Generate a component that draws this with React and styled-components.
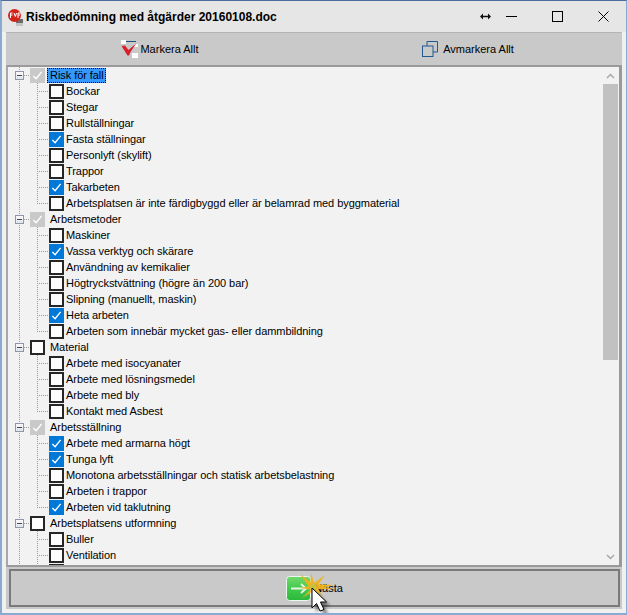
import React from 'react'
import styled, { createGlobalStyle } from 'styled-components'

const GlobalStyle = createGlobalStyle`
  html, body {
    margin: 0;
    padding: 0;
    background: #f0f0f0;
  }
  body {
    font-family: "Liberation Sans", Arial, sans-serif;
  }
`

const dotsDown = 'repeating-linear-gradient(to bottom, #9a9a9a 0 1px, transparent 1px 2px)'
const dotsAcross = 'repeating-linear-gradient(to right, #9a9a9a 0 1px, transparent 1px 2px)'

const Window = styled.div`
  width: 627px;
  height: 615px;
  box-sizing: border-box;
  display: flex;
  flex-direction: column;
  background: #f0f0f0;
  border: 1px solid #8aaad2;
  border-top-color: #4a6d9c;
  border-left-width: 2px;
  border-bottom: 2px solid #8aaad2;
  overflow: hidden;
  position: relative;
`

const TitleBar = styled.div`
  height: 31px;
  flex: none;
  display: flex;
  align-items: center;
  background: #e6e6e6;
  padding-left: 6px;
`

const AppBadge = styled.svg`
  width: 16px;
  height: 18px;
  flex: none;
  margin-right: 2px;
`

const TitleText = styled.span`
  flex: 1;
  font-size: 12px;
  font-weight: bold;
  color: #000;
  white-space: nowrap;
`

const ResizeHint = styled.div`
  width: 11px;
  height: 31px;
  flex: none;
  margin-right: -3px;
  display: flex;
  align-items: center;
`

const WindowButton = styled.div`
  width: 46px;
  height: 31px;
  display: flex;
  align-items: center;
  justify-content: center;
  flex: none;
`

const Body = styled.div`
  flex: 1;
  display: flex;
  flex-direction: column;
  margin: 0 4px 4px 4px;
  min-height: 0;
`

const Toolbar = styled.div`
  height: 33px;
  flex: none;
  display: grid;
  grid-template-columns: 1fr 1fr;
  background: #c9c9c9;
  border-top: 1px solid #b4b4b4;
  box-sizing: border-box;
`

const ToolButton = styled.div`
  display: flex;
  align-items: center;
  justify-content: center;
  gap: ${p => p.$gap || 2}px;
  font-size: 11px;
  color: #000;
`

const TreeFrame = styled.div`
  height: 502px;
  flex: none;
  box-sizing: border-box;
  display: flex;
  background: #f2f2f2;
  border: 2px solid #9a9a9a;
  border-right-width: 3px;
  border-left-color: #a8a8a8;
  overflow: hidden;
`

const TreeList = styled.div`
  flex: 1;
  min-width: 0;
  overflow: hidden;
`

const Row = styled.div`
  height: 16px;
  display: flex;
  align-items: center;
`

const TrunkCell = styled.div`
  width: 29px;
  height: 16px;
  flex: none;
  background-image: ${dotsDown};
  background-repeat: no-repeat;
  background-size: 1px 16px;
  background-position: 11px 0;
`

const RootGuide = styled.div`
  width: 22px;
  height: 16px;
  flex: none;
  display: flex;
  align-items: center;
  padding-left: 7px;
  box-sizing: border-box;
  background-image: ${dotsAcross}, ${dotsDown};
  background-repeat: no-repeat;
  background-size: 9px 1px, 1px 16px;
  background-position: 14px 8px, 11px 0;
`

const Expander = styled.div`
  width: 9px;
  height: 9px;
  box-sizing: border-box;
  border: 1px solid #8d97a5;
  background: linear-gradient(#fafafa, #dfe4ea);
  display: flex;
  align-items: center;
  justify-content: center;
  &::after {
    content: '';
    width: 5px;
    height: 1px;
    background: #3a4a66;
  }
`

const ChildGuide = styled.div`
  width: 12px;
  height: 16px;
  flex: none;
  background-image: ${dotsAcross}, ${dotsDown};
  background-repeat: no-repeat;
  background-size: 12px 1px, 1px ${p => (p.$last ? '9px' : '16px')};
  background-position: 0 8px, 0 0;
`

const boxColors = {
  gray: '#c9c9c9',
  on: '#0078d7',
  off: '#fdfdfd',
}

const Box = styled.div`
  width: 15px;
  height: 15px;
  box-sizing: border-box;
  flex: none;
  background: ${p => boxColors[p.$state]};
  border: 2px solid ${p => (p.$state === 'off' ? '#262626' : boxColors[p.$state])};
  display: flex;
  align-items: center;
  justify-content: center;
`

const Label = styled.span`
  font-size: 11px;
  line-height: 15px;
  letter-spacing: -0.06px;
  color: #000;
  white-space: nowrap;
  margin-left: ${p => (p.$root ? '2px' : '1px')};
  padding: 0 2px 0 ${p => (p.$root ? '3px' : '1px')};
  box-sizing: border-box;
  ${p => p.$selected && `
    background: #3399ff;
    outline: 1px dotted #000;
    outline-offset: -1px;
  `}
`

const ScrollBar = styled.div`
  width: 17px;
  flex: none;
  display: flex;
  flex-direction: column;
  align-items: center;
  background: #f2f2f2;
`

const ScrollArrow = styled.div`
  height: 17px;
  flex: none;
  display: flex;
  align-items: center;
  justify-content: center;
`

const ScrollTrack = styled.div`
  flex: 1;
  align-self: stretch;
  padding-left: 1px;
`

const ScrollThumb = styled.div`
  height: 276px;
  background: #c1c1c1;
  width: 15px;
`

const NextPanel = styled.div`
  flex: none;
  height: 42px;
  box-sizing: border-box;
  background: #c9c9c9;
  padding: 2px;
  border-left: 1px solid #c9c9c9;
`

const NextButton = styled.div`
  height: 38px;
  box-sizing: border-box;
  border: 2px solid #7a7a7a;
  display: flex;
  align-items: center;
  justify-content: center;
  gap: 3px;
  font-size: 11px;
  color: #000;
`

const GreenIcon = styled.svg`
  width: 25px;
  height: 25px;
  flex: none;
`

const CursorOverlay = styled.svg`
  position: absolute;
  left: 287px;
  top: 563px;
  width: 60px;
  height: 52px;
  pointer-events: none;
`

const Check = ({ color = '#fff' }) => (
  <svg width="11" height="11" viewBox="0 0 12 12">
    <path d="M1.500 6.500 L4.500 9.500 L10.500 2" fill="none" stroke={color} strokeWidth="1.500" />
  </svg>
)

const tree = [
  {
    label: 'Risk för fall', state: 'gray', selected: true,
    items: [
      ['Bockar'], ['Stegar'], ['Rullställningar'], ['Fasta ställningar', true],
      ['Personlyft (skylift)'], ['Trappor'], ['Takarbeten', true],
      ['Arbetsplatsen är inte färdigbyggd eller är belamrad med byggmaterial'],
    ],
  },
  {
    label: 'Arbetsmetoder', state: 'gray',
    items: [
      ['Maskiner'], ['Vassa verktyg och skärare', true], ['Användning av kemikalier'],
      ['Högtryckstvättning (högre än 200 bar)'], ['Slipning (manuellt, maskin)'],
      ['Heta arbeten', true], ['Arbeten som innebär mycket gas- eller dammbildning'],
    ],
  },
  {
    label: 'Material', state: 'off',
    items: [
      ['Arbete med isocyanater'], ['Arbete med lösningsmedel'], ['Arbete med bly'],
      ['Kontakt med Asbest'],
    ],
  },
  {
    label: 'Arbetsställning', state: 'gray',
    items: [
      ['Arbete med armarna högt', true], ['Tunga lyft', true],
      ['Monotona arbetsställningar och statisk arbetsbelastning'],
      ['Arbeten i trappor'], ['Arbeten vid taklutning', true],
    ],
  },
  {
    label: 'Arbetsplatsens utformning', state: 'off',
    items: [['Buller'], ['Ventilation'], ['']],
  },
]

const TreeBranch = ({ node }) => (
  <>
    <Row>
      <RootGuide><Expander /></RootGuide>
      <Box $state={node.state}>{node.state === 'gray' && <Check />}</Box>
      <Label $root $selected={node.selected}>{node.label}</Label>
    </Row>
    {node.items.map(([label, checked], i) => (
      <Row key={label || i}>
        <TrunkCell />
        <ChildGuide $last={i === node.items.length - 1} />
        <Box $state={checked ? 'on' : 'off'}>{checked && <Check />}</Box>
        <Label>{label}</Label>
      </Row>
    ))}
  </>
)

const App = () => (
  <Window>
    <GlobalStyle />
    <TitleBar>
      <AppBadge viewBox="0 0 16 18">
        <rect x="8" y="11" width="7" height="6" fill="#6b6b6b" />
        <rect x="8" y="15" width="7" height="3" fill="#c4c4c4" />
        <circle cx="6.500" cy="7.500" r="6.500" fill="#d3241c" />
        <path d="M2.500 10V5h2M2.500 7h2M6 5l1.300 3.500L8.600 5M10 10V5h2.500M10 7h2" stroke="#fff" strokeWidth="1" fill="none" />
      </AppBadge>
      <TitleText>Riskbedömning med åtgärder 20160108.doc</TitleText>
      <ResizeHint>
        <svg width="11" height="7" viewBox="0 0 11 7">
          <path d="M0 3.500 L3 0.500 V6.500Z M11 3.500 L8 0.500 V6.500Z" fill="#111" />
          <path d="M2 3.500H9" stroke="#111" strokeWidth="1.500" />
        </svg>
      </ResizeHint>
      <WindowButton>
        <svg width="11" height="11" viewBox="0 0 11 11"><path d="M0 5.500H11" stroke="#000" /></svg>
      </WindowButton>
      <WindowButton>
        <svg width="11" height="11" viewBox="0 0 11 11"><rect x="0.500" y="0.500" width="10" height="10" fill="none" stroke="#000" /></svg>
      </WindowButton>
      <WindowButton>
        <svg width="11" height="11" viewBox="0 0 11 11"><path d="M0.500 0.500L10.500 10.500M10.500 0.500L0.500 10.500" stroke="#000" /></svg>
      </WindowButton>
    </TitleBar>
    <Body>
      <Toolbar>
        <ToolButton>
          <svg width="17" height="18" viewBox="0 0 17 18">
            <rect x="0" y="0" width="5" height="4" fill="#fff" />
            <rect x="5" y="1" width="10" height="1" fill="#1f4f80" />
            <rect x="11" y="13" width="6" height="5" fill="#fff" />
            <rect x="13" y="4" width="4" height="3" fill="#fff" />
            <path d="M0.500 6 L4 5.500 L7.500 10 L15.500 3 L9.500 12 L8 15.500 L6.500 15.500 Z" fill="#d8202a" />
          </svg>
          Markera Allt
        </ToolButton>
        <ToolButton $gap={5}>
          <svg width="16" height="16" viewBox="0 0 16 16">
            <path d="M5 5V0.500H15.500V11H11" fill="none" stroke="#1f5a93" />
            <rect x="0.500" y="5" width="10.500" height="10.500" fill="none" stroke="#1f5a93" />
          </svg>
          Avmarkera Allt
        </ToolButton>
      </Toolbar>
      <TreeFrame>
        <TreeList>
          {tree.map(node => <TreeBranch key={node.label} node={node} />)}
        </TreeList>
        <ScrollBar>
          <ScrollArrow>
            <svg width="9" height="6" viewBox="0 0 9 6"><path d="M1 5L4.500 1.500L8 5" fill="none" stroke="#a8a8a8" strokeWidth="1.500" /></svg>
          </ScrollArrow>
          <ScrollTrack><ScrollThumb /></ScrollTrack>
          <ScrollArrow>
            <svg width="9" height="6" viewBox="0 0 9 6"><path d="M1 1L4.500 4.500L8 1" fill="none" stroke="#a8a8a8" strokeWidth="1.500" /></svg>
          </ScrollArrow>
        </ScrollBar>
      </TreeFrame>
      <NextPanel>
        <NextButton>
          <GreenIcon viewBox="0 0 25 25">
            <defs>
              <linearGradient id="greenFill" x1="0" y1="0" x2="0" y2="1">
                <stop offset="0" stopColor="#74d96f" />
                <stop offset="0.45" stopColor="#45cc4e" />
                <stop offset="1" stopColor="#2cb83c" />
              </linearGradient>
            </defs>
            <rect x="0.500" y="0.500" width="24" height="24" rx="3" fill="url(#greenFill)" stroke="#eef7ee" />
            <path d="M5 12.500H20" fill="none" stroke="#e6f5e6" strokeWidth="2" />
            <path d="M15 8l5 4.500-5 4.500" fill="none" stroke="#e6f5e6" strokeWidth="2" />
          </GreenIcon>
          Nästa
        </NextButton>
      </NextPanel>
    </Body>
    <CursorOverlay viewBox="0 0 60 52">
      <defs>
        <filter id="cursorShadow" x="-50%" y="-50%" width="200%" height="200%">
          <feGaussianBlur stdDeviation="1.500" />
        </filter>
      </defs>
      <g fill="#eeb31c" opacity="0.92">
        <path d="M11 10L25 21L21 25Z" />
        <path d="M22 9L26 22L21 22Z" />
        <path d="M36 11L26 25L22 21Z" />
        <path d="M45 21L24 26L24 20Z" />
        <path d="M45 25L24 25L25 21Z" />
        <path d="M11 24L24 21L24 26Z" />
        <path d="M13 34L25 22L26 26Z" />
        <path d="M34 32L22 25L25 21Z" />
      </g>
      <circle cx="24" cy="23" r="3" fill="#c8c040" />
      <path d="M25 26V46L29.500 41.500L33 49L37 47.500L33.500 40H39.500Z" fill="#000" opacity="0.450" filter="url(#cursorShadow)" transform="translate(2 2)" />
      <path d="M23 24V44L27.500 39.500L31 47L35 45.500L31.500 38H37.500Z" fill="#fff" stroke="#000" strokeWidth="1" />
    </CursorOverlay>
  </Window>
)

export default App
